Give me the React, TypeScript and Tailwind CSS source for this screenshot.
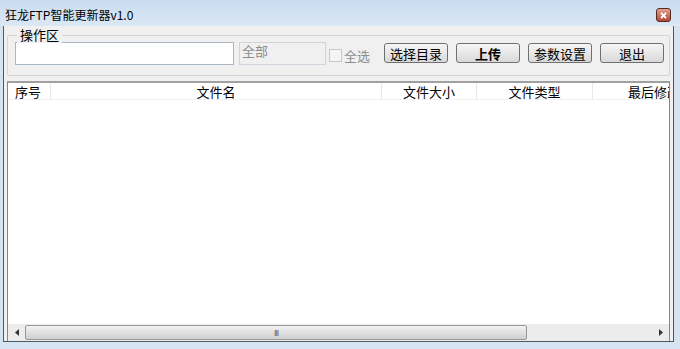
import React from "react";

const font = { fontFamily: '"Noto Sans CJK SC", "Liberation Sans", sans-serif' };

function Btn({ label, bold }: { label: string; bold?: boolean }) {
  return (
    <div
      className={`h-[20px] w-[64px] flex items-center justify-center rounded-[3px] border border-[#707070] bg-gradient-to-b from-[#f6f6f6] via-[#e8e8e8] to-[#d8d8d8] text-[13px] text-black leading-none ${bold ? "font-bold" : ""}`}
    >
      {label}
    </div>
  );
}

export default function App() {
  return (
    <div className="w-[680px] h-[349px] bg-[#d6e4f2] relative overflow-hidden select-none" style={font}>
      {/* title bar */}
      <div className="h-[26px] bg-gradient-to-b from-[#c9dcef] to-[#dbe8f5] flex items-center pl-[5px] pr-[9px] relative">
        <span className="text-[12px] text-black leading-none mt-[4px]">狂龙FTP智能更新器v1.0</span>
        <div className="ml-auto mt-[4px] w-[15px] h-[14px] rounded-[3px] border border-[#5a2a22] bg-gradient-to-b from-[#e0a090] to-[#b04a38] flex items-center justify-center">
          <svg width="7" height="7" viewBox="0 0 7 7">
            <path d="M1 1 L6 6 M6 1 L1 6" stroke="white" strokeWidth="1.8" />
          </svg>
        </div>
      </div>
      {/* client */}
      <div className="absolute left-[3px] top-[26px] w-[671px] h-[316px] border-l border-r border-b border-[#4a5a66] bg-[#f0f0f0] flex flex-col">
        {/* group box */}
        <div className="mx-[3px] mt-[9px] h-[41px] border border-[#d5d5d5] rounded-[2px] relative flex items-start pt-[6px] pl-[7px] gap-[5px]">
          <span className="absolute left-[9px] top-[-9px] bg-[#f0f0f0] px-[3px] text-[13px] leading-[16px]">操作区</span>
          <div className="w-[219px] h-[23px] border border-[#aab6c4] bg-white" />
          <div className="w-[87px] h-[23px] border border-[#cfd5dc] bg-[#f0f0f0] text-[13px] text-[#8d8d8d] pl-[2px] leading-[16px]">全部</div>
          <div className="flex items-center ml-[-2px] mt-[4px]">
            <div className="w-[13px] h-[13px] border border-[#c8c8c8] bg-[#f4f4f4]" />
            <span className="text-[13px] text-[#8d8d8d] ml-[2px]">全选</span>
          </div>
          <div className="flex gap-[8px] ml-[9px] mt-[1px]">
            <Btn label="选择目录" />
            <Btn label="上传" bold />
            <Btn label="参数设置" />
            <Btn label="退出" />
          </div>
        </div>
        {/* list view */}
        <div className="mx-[3px] mt-[5px] flex-1 border-t-2 border-l border-r border-[#828790] border-t-[#a0a0a0] bg-white flex flex-col">
          <div className="h-[17px] flex text-[13px] leading-[17px] text-black border-b border-[#f0f0f0]">
            <div className="w-[43px] pl-[7px] border-r border-[#e8e8e8]">序号</div>
            <div className="w-[331px] text-center border-r border-[#e8e8e8]">文件名</div>
            <div className="w-[95px] text-center border-r border-[#e8e8e8]">文件大小</div>
            <div className="w-[116px] text-center border-r border-[#e8e8e8]">文件类型</div>
            <div className="flex-1 pl-[35px] whitespace-nowrap overflow-hidden">最后修改</div>
          </div>
          <div className="flex-1" />
          {/* horizontal scrollbar */}
          <div className="h-[17px] bg-[#ececec] flex items-center">
            <div className="w-[17px] h-full flex items-center justify-center">
              <svg width="4" height="7" viewBox="0 0 4 7"><path d="M4 0 L0 3.5 L4 7 Z" fill="#333" /></svg>
            </div>
            <div className="w-[502px] h-[15px] rounded-[2px] border border-[#999] bg-gradient-to-b from-[#f2f2f2] to-[#cfcfcf] flex items-center justify-center">
              <span className="text-[8px] text-[#555] leading-none tracking-[-1px]">III</span>
            </div>
            <div className="flex-1" />
            <div className="w-[17px] h-full flex items-center justify-center">
              <svg width="4" height="7" viewBox="0 0 4 7"><path d="M0 0 L4 3.5 L0 7 Z" fill="#333" /></svg>
            </div>
          </div>
        </div>
      </div>
    </div>
  );
}
